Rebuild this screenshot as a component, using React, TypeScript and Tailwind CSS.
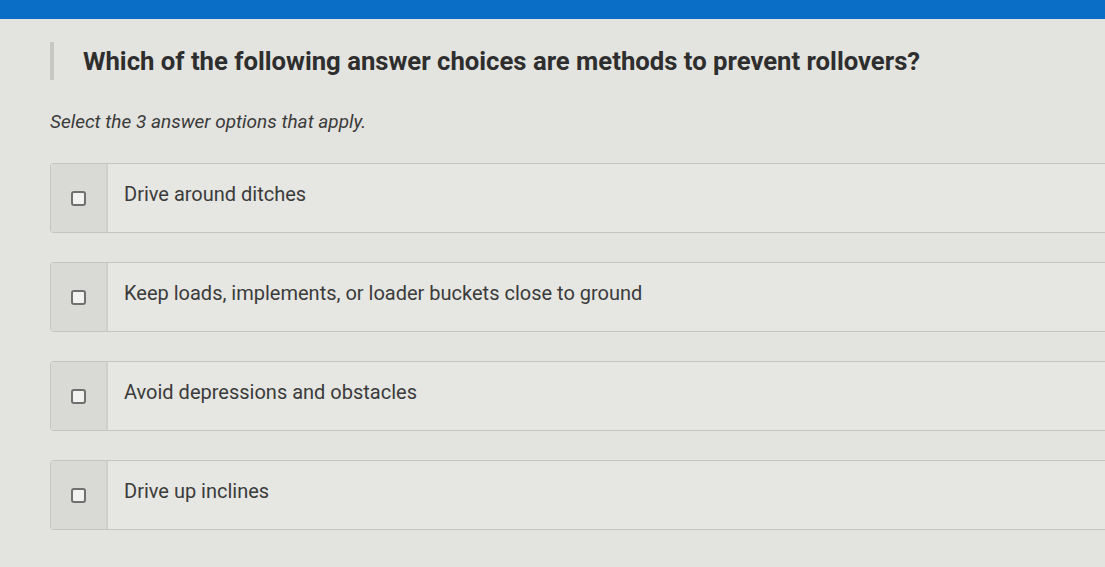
const options = [
  "Drive around ditches",
  "Keep loads, implements, or loader buckets close to ground",
  "Avoid depressions and obstacles",
  "Drive up inclines",
];

function OptionRow({ label }: { label: string }) {
  return (
    <label className="flex h-[70px] rounded-l-[4px] border border-r-0 border-[#c4c4c0] bg-[#e6e6e2] cursor-pointer">
      <div className="flex w-[57px] shrink-0 items-center justify-center border-r-2 border-[#cfcfcb] bg-[#d9d9d5]">
        <span className="block h-[15px] w-[15px] rounded-[3px] border-2 border-[#707070] bg-[#f2f2f0]" />
      </div>
      <div className="pl-[16px] pt-[18px] text-[20px] leading-[24px] text-[#3b3b3b]">
        {label}
      </div>
    </label>
  );
}

export default function App() {
  return (
    <div
      className="min-h-[567px] w-full overflow-hidden bg-[#e3e3df]"
      style={{ fontFamily: "Roboto, 'Liberation Sans', sans-serif" }}
    >
      <div className="h-[19px] bg-[#0b6ec6]" />
      <div className="pl-[50px]">
        <div className="mt-[23px] flex items-center">
          <div className="h-[38px] w-[4px] bg-[#c6c6c2]" />
          <h1 className="ml-[29px] text-[25.7px] font-bold leading-[32px] text-[#2e2e2e]">
            Which of the following answer choices are methods to prevent rollovers?
          </h1>
        </div>
        <p className="mt-[30px] text-[19px] italic leading-[24px] text-[#3a3a3a]">
          Select the 3 answer options that apply.
        </p>
        <div className="mt-[29px] flex flex-col gap-[29px]">
          {options.map((o) => (
            <OptionRow key={o} label={o} />
          ))}
        </div>
      </div>
    </div>
  );
}
